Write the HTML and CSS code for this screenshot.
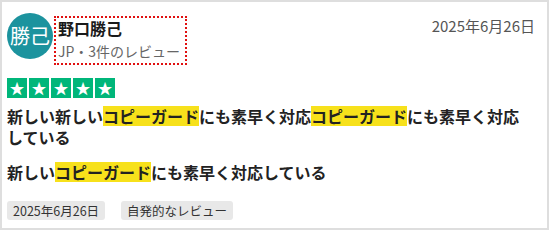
FILE: index.html
```html
<!DOCTYPE html>
<html lang="ja">
<head>
    <meta charset="UTF-8">
    <title>レビュー</title>
    <link rel="stylesheet" href="styles.css">
</head>
<body>
    <div class="review-card">
        <div class="review-header">
            <div class="avatar">勝己</div>
            <div class="reviewer">
                <div class="reviewer-name">野口勝己</div>
                <div class="reviewer-meta">JP・3件のレビュー</div>
            </div>
            <div class="review-date">2025年6月26日</div>
        </div>
        <div class="stars">
            <span class="star">★</span>
            <span class="star">★</span>
            <span class="star">★</span>
            <span class="star">★</span>
            <span class="star">★</span>
        </div>
        <div class="review-body">
            <p>新しい新しい<mark>コピーガード</mark>にも素早く対応<mark>コピーガード</mark>にも素早く対応している</p>
            <p>新しい<mark>コピーガード</mark>にも素早く対応している</p>
        </div>
        <div class="tags">
            <span class="tag">2025年6月26日</span>
            <span class="tag">自発的なレビュー</span>
        </div>
    </div>
</body>
</html>
```

FILE: styles.css
```css
html, body {
    margin: 0;
    font-family: "Noto Sans CJK JP", "Noto Sans", sans-serif;
    background: #ffffff;
}
.review-card {
    box-sizing: border-box;
    width: 549px;
    height: 230px;
    border: 2px solid #dedede;
    padding: 11px 5px 0 5px;
    color: #222;
}
.review-header {
    display: flex;
    align-items: flex-start;
}
.avatar {
    width: 46px;
    height: 46px;
    border-radius: 50%;
    background-color: #1c939e; /* teal */
    color: #fff;
    font-size: 20px;
    line-height: 46px;
    text-align: center;
    flex-shrink: 0;
}
.reviewer {
    margin-left: 1px;
    margin-top: 3px;
    border: 2px dotted #e01010;
    padding: 0 5px 2px 2px;
}
.reviewer-name {
    font-size: 16px;
    font-weight: bold;
    line-height: 20px;
    color: #1a1a1a;
}
.reviewer-meta {
    font-size: 14px;
    line-height: 20px;
    margin-top: 3px;
    color: #666;
}
.review-date {
    margin-left: auto;
    margin-right: 7px;
    margin-top: 3px;
    font-size: 15px;
    line-height: 20px;
    color: #555;
}
.stars {
    display: flex;
    gap: 2px;
    margin-top: 13px;
}
.star {
    width: 20px;
    height: 20px;
    background-color: #00b67a;
    color: #fff;
    font-size: 15px;
    line-height: 20px;
    text-align: center;
}
.review-body {
    margin-top: 8px;
    width: 528px;
}
.review-body p {
    margin: 0 0 14px 0;
    font-size: 16px;
    font-weight: bold;
    line-height: 21px;
    color: #222;
}
mark {
    display: inline-block;
    line-height: 20px;
    background-color: #f7e11b;
    color: #222;
}
.tags {
    display: flex;
    gap: 16px;
    margin-top: 18px;
}
.tag {
    background-color: #e8e8e8;
    border-radius: 3px;
    font-size: 12.5px;
    line-height: 19px;
    padding: 0 6px;
    color: #333;
}
```
